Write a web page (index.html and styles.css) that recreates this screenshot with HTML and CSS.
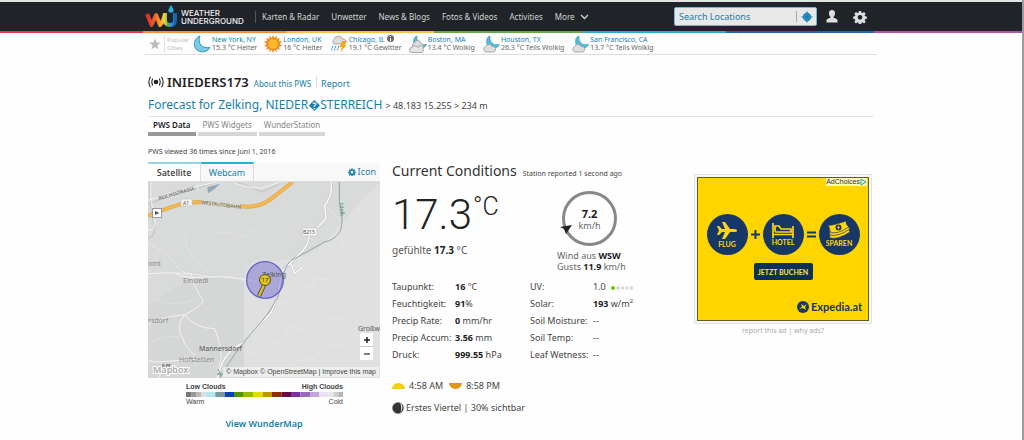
FILE: index.html
```html
<!DOCTYPE html>
<html lang="de">
<head>
<meta charset="utf-8">
<title>INIEDERS173 | Weather Underground</title>
<link rel="stylesheet" href="styles.css">
</head>
<body>
<svg class="defs" aria-hidden="true">
  <symbol id="moon" viewBox="0 0 18 18"><path d="M7 1C4 8 9 14 17 12.500C14 19 3 18 1.500 11C.8 6 3 2.500 7 1Z" fill="#7cc9e4" stroke="#2a9ac4"/></symbol>
  <symbol id="mooncloud" viewBox="0 0 18 18"><path d="M8 1C7 7 11 11 17.500 9.500C15 15 7 14 5 9C4 5 5 2 8 1Z" fill="#55bbdf" stroke="#2a9ac4" stroke-width=".7"/><path d="M3.500 17A3 3 0 0 1 3.500 11.500A3.500 3.500 0 0 1 10 11.500A2.800 2.800 0 0 1 11.500 17Z" fill="#dedede" stroke="#999" stroke-width=".8"/></symbol>
  <symbol id="gear" viewBox="0 0 16 16"><path fill="currentColor" fill-rule="evenodd" d="M6.700 1h2.600l.4 2 1.100.5 1.800-1.200 1.900 1.900-1.200 1.800.5 1.100 2 .4v2.600l-2 .4-.5 1.100 1.200 1.800-1.900 1.900-1.800-1.200-1.100.5-.4 2H6.700l-.4-2-1.100-.5-1.800 1.200-1.900-1.900 1.200-1.800-.5-1.100-2-.4V7.500l2-.4.5-1.100L1.500 4.200l1.900-1.900 1.800 1.200 1.100-.5ZM8 5.700a2.700 2.700 0 1 0 0 5.400a2.700 2.700 0 1 0 0-5.400Z"/></symbol>
</svg>
<header class="topbar">
  <div class="container topbar-inner">
    <a class="logo" href="#">
      <svg width="34" height="24" viewBox="0 0 34 24" aria-hidden="true">
        <defs>
          <linearGradient id="wfill"><stop offset="0" stop-color="#d8302f"/><stop offset=".45" stop-color="#f0642c"/><stop offset=".8" stop-color="#fbb02e"/><stop offset="1" stop-color="#f5cf35"/></linearGradient>
          <linearGradient id="ufill"><stop offset="0" stop-color="#e8d53a"/><stop offset=".25" stop-color="#5bb350"/><stop offset=".6" stop-color="#1f9ed8"/><stop offset="1" stop-color="#1762b5"/></linearGradient>
        </defs>
        <path d="M2 9L6.500 20L11 10L15 20Q18 17 20 9" fill="none" stroke="url(#wfill)" stroke-width="4" stroke-linejoin="round"/>
        <path d="M20 8V15Q20 20 25 20Q30 20 30 15V8" fill="none" stroke="url(#ufill)" stroke-width="4"/>
        <path d="M26 0Q22.500 5 23.500 6.500Q26 9 28.500 6.500Q29 4.500 26 0Z" fill="#35a9df"/>
      </svg>
      <span>WEATHER<br>UNDERGROUND</span>
    </a>
    <nav class="nav">
      <a href="#">Karten &amp; Radar</a><a href="#">Unwetter</a><a href="#">News &amp; Blogs</a><a href="#">Fotos &amp; Videos</a><a href="#">Activities</a>
      <a href="#">More <svg width="9" height="6" viewBox="0 0 9 6" aria-hidden="true"><path d="M1 1L4.500 4.500L8 1" fill="none" stroke="currentColor" stroke-width="1.300"/></svg></a>
    </nav>
    <form class="search">
      <input type="text" placeholder="Search Locations" aria-label="Search Locations">
      <button type="button" aria-label="Locate me"><svg width="12" height="12" viewBox="0 0 12 12"><circle cx="6" cy="6" r="4.200" fill="#157fae"/><path d="M6 .5V11.500M.5 6H11.500" stroke="#157fae" stroke-width="1.200"/><circle cx="6" cy="6" r="2.600" fill="none" stroke="#5aa8c8" stroke-width=".7"/></svg></button>
    </form>
    <button class="tool" type="button" aria-label="Account"><svg width="12" height="13" viewBox="0 0 12 13"><path fill="currentColor" d="M6 0a3 3.200 0 0 1 3 3.300c0 1.700-.7 2.900-1.500 3.700v.8C10 8.700 11.500 9 11.500 10.500V12.500H.5V10.500C.5 9 2 8.700 4.500 7.800V7C3.700 6.200 3 5 3 3.300A3 3.200 0 0 1 6 0Z"/></svg></button>
    <button class="tool" type="button" aria-label="Settings"><svg width="14" height="14"><use href="#gear"/></svg></button>
  </div>
</header>
<div class="rainbow"></div>
<section class="container cities" aria-label="Popular Cities">
  <button class="star" type="button" aria-label="Favourites"><svg width="12" height="12" viewBox="0 0 12 12"><path fill="#bbb" d="M6 .5L7.500 4.400L11.700 4.600L8.400 7.200L9.500 11.300L6 9L2.500 11.300L3.600 7.200L.3 4.600L4.500 4.400Z"/></svg></button>
  <div class="popular">Popular<br>Cities</div>
  <div class="city"><svg width="18" height="18"><use href="#moon"/></svg><p><a href="#">New York, NY</a>15.3 °C Heiter</p></div>
  <div class="city"><svg width="18" height="18" viewBox="0 0 18 18"><path fill="#f08a24" d="M9 0l1.300 3 2.300-2.400.1 3.300 3.200-1.100-1.200 3.100 3.300.6L15.500 9l2.500 2-3.300.7 1.200 3-3.200-1-.1 3.300-2.300-2.300L9 18l-1.300-3.300L5.400 17l-.1-3.300-3.200 1 1.200-3L0 11l2.500-2L0 6.500l3.300-.6-1.200-3.100 3.200 1.100.1-3.300L7.700 3Z"/><circle cx="9" cy="9" r="4.800" fill="#fdb92e"/></svg><p><a href="#">London, UK</a>16 °C Heiter</p></div>
  <div class="city"><svg width="18" height="18" viewBox="0 0 18 18"><path d="M4 9A2.800 2.800 0 0 1 4 4.500A4.500 4.500 0 0 1 12.500 4A2.700 2.700 0 0 1 14.500 9Z" fill="#ddd" stroke="#999" stroke-width=".8"/><path fill="#f9a61a" d="M12 6H17L14.500 10H16.500L10 17.500L12 12H9.500Z"/><path d="M3 11L1 16M6 11L4 16M9 11L7 16" stroke="#3ba7da" stroke-width="1.200" stroke-dasharray="2 .7"/></svg><p><a href="#">Chicago, IL</a> <svg class="info" width="7" height="7" viewBox="0 0 7 7"><circle cx="3.500" cy="3.500" r="3.500" fill="#666"/><path d="M3.500 1V2M3.500 3V6" stroke="#fff"/></svg><br>19.1 °C Gewitter</p></div>
  <div class="city"><svg width="18" height="18" viewBox="0 0 18 18"><use href="#mooncloud"/><path d="M5 13A3 3 0 0 1 5 8A3.600 3.600 0 0 1 12 8.500A2.600 2.600 0 0 1 13 13.500Z" fill="#ddd" stroke="#999" stroke-width=".8"/><path d="M3 17.500A2.500 2.500 0 0 1 3 12.500A3.500 3.500 0 0 1 9 12.500A2.500 2.500 0 0 1 14 14Q15 16.500 13 17.500Z" fill="#e5e5e5" stroke="#999" stroke-width=".8"/></svg><p><a href="#">Boston, MA</a>13.4 °C Wolkig</p></div>
  <div class="city"><svg width="18" height="18"><use href="#mooncloud"/></svg><p><a href="#">Houston, TX</a>26.3 °C Teils Wolkig</p></div>
  <div class="city"><svg width="18" height="18"><use href="#mooncloud"/></svg><p><a href="#">San Francisco, CA</a>13.7 °C Teils Wolkig</p></div>
</section>
<main class="container page">
  <div class="title">
    <svg width="16" height="12" viewBox="0 0 16 12" aria-hidden="true"><circle cx="8" cy="6" r="2.300" fill="#222"/><path d="M4.800 2.500Q2.800 6 4.800 9.500M2.500 .7Q-.8 6 2.500 11.300M11.200 2.500Q13.200 6 11.200 9.500M13.500 .7Q16.800 6 13.500 11.300" fill="none" stroke="#222" stroke-width="1.100"/></svg>
    <h1>INIEDERS173</h1><a class="about" href="#">About this PWS</a><a class="report" href="#">Report</a>
  </div>
  <div class="forecast"><a href="#">Forecast for Zelking, NIEDER�STERREICH</a> <span>&gt; 48.183 15.255 &gt; 234 m</span></div>
  <nav class="tabs"><a class="active" href="#">PWS Data</a><a href="#">PWS Widgets</a><a href="#">WunderStation</a></nav>
  <p class="views">PWS viewed 36 times since Juni 1, 2016</p>
  <div class="columns">
    <section class="map-col">
      <div class="map-tabs"><a class="active" href="#">Satellite</a><a href="#">Webcam</a><a class="icon-link" href="#"><svg width="8" height="8"><use href="#gear"/></svg> Icon</a></div>
      <div class="map">
        <svg class="map-art" viewBox="0 0 232 196" role="img" aria-label="Karte von Zelking">
          <rect width="232" height="196" fill="#d9dada"/>
          <g transform="scale(.33333)">
            <path d="M698 0L640 55Q580 130 510 200Q440 245 330 235Q285 250 288 310V588H698Z" fill="#dfe0df"/>
            <path d="M288 300V588H0V370Q100 300 180 276Z" fill="#d5d7d7"/>
            <path d="M178 16L216 5L196 24L180 34Z" fill="#93a7b5"/>
            <g fill="none" stroke="#c9caca" stroke-width="5"><path d="M0 170Q25 160 18 130L8 85L5 0"/><path d="M0 185Q50 205 80 240Q90 275 130 275L200 286"/><path d="M0 65Q100 30 210 0M150 24L147 0M255 0Q290 5 340 30Q390 10 400 0"/></g>
            <g fill="none" stroke="#f2f2f1" stroke-width="3">
              <path d="M8 0Q5 60 20 100Q25 150 0 145M0 55Q100 20 210 0M150 24L147 0M255 0Q290 18 340 18L400 0"/>
              <path d="M0 185Q50 205 80 240Q90 275 130 275L200 286M80 275Q110 290 180 285Q240 280 330 300"/>
              <path d="M0 275Q60 270 130 275Q130 300 165 355Q160 375 110 398L70 403L0 425M110 398Q140 440 200 440Q220 490 220 530L205 588M110 398Q80 430 105 470Q110 495 140 520"/>
              <path d="M180 530L20 540L0 535M60 545L30 588"/>
            </g>
            <g fill="none" stroke="#eaebea" stroke-width="1.500">
              <path d="M360 400L390 360Q440 370 430 340Q470 350 460 310Q510 330 500 290Q560 300 545 280L620 320L698 270"/>
              <path d="M300 515Q350 520 365 480Q405 500 415 440Q450 430 480 450Q530 450 540 410Q590 420 610 380L698 340M430 550Q450 520 500 530Q530 480 590 490L650 420"/>
              <path d="M540 80L575 110L560 160L590 180L570 215M110 160Q120 230 160 250L180 275M190 160Q230 140 280 165L330 140"/>
              <path d="M0 490Q50 450 100 470M20 350Q70 380 150 350"/>
            </g>
            <path d="M0 102Q65 75 115 62L160 60M275 73Q340 80 380 42L434 0" fill="none" stroke="#dba84c" stroke-width="12"/>
            <path d="M0 102Q65 75 115 62L160 60M275 73Q340 80 380 42L434 0" fill="none" stroke="#f3b950" stroke-width="8"/>
            <path d="M160 60L275 73" fill="none" stroke="#e6d3ae" stroke-width="8"/>
            <path d="M550 0Q552 45 530 70L534 110L482 165Q485 190 445 225L400 270Q395 340 370 390L290 480Q220 510 210 588M425 235L440 275L465 255" fill="none" stroke="#bfc0c0" stroke-width="8"/>
            <path d="M550 0Q552 45 530 70L534 110L482 165Q485 190 445 225L400 270Q395 340 370 390L290 480Q220 510 210 588M425 235L440 275L465 255" fill="none" stroke="#f8f8f7" stroke-width="5"/>
            <path d="M574 0V60Q588 110 578 145Q560 175 530 180L430 235Q405 255 398 320Q380 380 310 455Q260 510 215 588" fill="none" stroke="#90a5b4" stroke-width="3"/>
            <circle cx="351" cy="294" r="55" fill="#7770d4" fill-opacity=".5" stroke="#6963c5" stroke-width="4"/>
          </g>
          <g class="road-label">
            <text transform="translate(11 18) rotate(-16)">REICHSSTRASSE</text>
            <text transform="translate(53 22) rotate(7)">WESTAUTOBAHN</text>
            <rect x="33" y="17" width="11" height="7" fill="#f3f3f3" stroke="#bbb" stroke-width=".5"/><text x="35" y="23">A1</text>
            <rect x="154" y="46" width="15" height="8" fill="#f3f3f3" stroke="#bbb" stroke-width=".5"/><text x="155" y="52">B215</text>
            <text class="river" transform="translate(191 21) rotate(85)">Melk</text>
          </g>
          <g class="place"><text x="0" y="84">oint</text><text x="35" y="101">Einsiedl</text><text x="0" y="141">rsdorf</text><text x="31" y="180">Hofstetten</text></g>
          <g class="place town"><text x="114" y="95">Zelking</text><text x="210" y="149">Großw</text><text x="51" y="169">Mannersdorf</text><text x="13" y="187">Aff</text></g>
          <path d="M117 101L111 114" stroke="#333" stroke-width="4"/><path d="M117 101L111 114" stroke="#dfc41e" stroke-width="2.500"/>
          <circle cx="117" cy="98" r="5.500" fill="#dfc41e" stroke="#554a22"/><text class="temp-pin" x="117" y="100" text-anchor="middle">17</text>
          <path d="M70 187L73 194M72 190L69 193M70 192H74" stroke="#67a38b"/>
          <text class="mapbox" x="5" y="191">Mapbox</text>
        </svg>
        <button class="play" type="button" aria-label="Play"><svg width="6" height="6" viewBox="0 0 6 6"><path d="M1 1L5.500 3L1 5Z" fill="#555"/></svg></button>
        <div class="zoom"><button type="button" aria-label="Zoom in"><svg width="8" height="8"><path d="M4 1V7M1 4H7" stroke="#222" stroke-width="1.500"/></svg></button><button type="button" aria-label="Zoom out"><svg width="8" height="8"><path d="M1 4H7" stroke="#555" stroke-width="1.500"/></svg></button></div>
        <div class="credit"><a href="#">© Mapbox</a> <a href="#">© OpenStreetMap</a> | <a href="#">Improve this map</a></div>
      </div>
      <div class="legend">
        <div class="legend-row strong"><span>Low Clouds</span><span>High Clouds</span></div>
        <svg viewBox="0 0 471 15" preserveAspectRatio="none" aria-hidden="true"><path fill="#777" d="M0 0h17v15H0z"/><path fill="#999" d="M17 0h15v15H17z"/><path fill="#bbb" d="M32 0h13v15H32z"/><path fill="#ddd" d="M45 0h14v15H45z"/><path fill="#b2e7eb" d="M59 0h29v15H59z"/><path fill="#7e999d" d="M88 0h28v15H88z"/><path fill="#0b40b5" d="M116 0h28v15h-28z"/><path fill="#529300" d="M144 0h29v15h-29z"/><path fill="#94bd00" d="M173 0h28v15h-28z"/><path fill="#dde000" d="M201 0h29v15h-29z"/><path fill="#c09600" d="M230 0h28v15h-28z"/><path fill="#902d00" d="M258 0h29v15h-29z"/><path fill="#6a0849" d="M287 0h28v15h-28z"/><path fill="#7932a0" d="M315 0h28v15h-28z"/><path fill="#9b68bf" d="M343 0h29v15h-29z"/><path fill="#c3a5d9" d="M372 0h28v15h-28z"/><path fill="#e9e1f1" d="M400 0h28v15h-28z"/><path fill="#e6e6e6" d="M428 0h15v15h-15z"/><path fill="#ccc" d="M443 0h14v15h-14z"/><path fill="#b4b4b4" d="M457 0h14v15h-14z"/></svg>
        <div class="legend-row"><span>Warm</span><span>Cold</span></div>
      </div>
      <a class="wundermap" href="#">View WunderMap</a>
    </section>
    <section class="conditions">
      <div class="cond-head"><h2>Current Conditions</h2><span>Station reported 1 second ago</span></div>
      <div class="now">
        <div><div class="temp"><span>17.3</span><span class="unit">°C</span></div><p class="feels">gefühlte <b>17.3</b> °C</p></div>
        <div class="wind">
          <div class="dial"><b>7.2</b><span>km/h</span><svg class="arrow" width="12" height="10" viewBox="0 0 12 10" aria-hidden="true"><path d="M0 2L12 0L6 9L4 4Z" fill="#222"/></svg></div>
          <p>Wind aus <b>WSW</b><br>Gusts <b>11.9</b> km/h</p>
        </div>
      </div>
      <table class="data">
        <tr><th>Taupunkt:</th><td><b>16</b> °C</td><th>UV:</th><td>1.0 <svg class="uv" width="23" height="4" viewBox="0 0 23 4"><circle cx="2" cy="2" r="2" fill="#70c800"/><g fill="#d8d8d8"><circle cx="7" cy="2" r="1.800"/><circle cx="11.500" cy="2" r="1.800"/><circle cx="16" cy="2" r="1.800"/><circle cx="20.500" cy="2" r="1.800"/></g></svg></td></tr>
        <tr><th>Feuchtigkeit:</th><td><b>91</b>%</td><th>Solar:</th><td><b>193</b> w/m<sup>2</sup></td></tr>
        <tr><th>Precip Rate:</th><td><b>0</b> mm/hr</td><th>Soil Moisture:</th><td>--</td></tr>
        <tr><th>Precip Accum:</th><td><b>3.56</b> mm</td><th>Soil Temp:</th><td>--</td></tr>
        <tr><th>Druck:</th><td><b>999.55</b> hPa</td><th>Leaf Wetness:</th><td>--</td></tr>
      </table>
      <div class="astro"><svg width="13" height="6" viewBox="0 0 13 6"><path d="M0 6A6.500 6 0 0 1 13 6Z" fill="#f2ce0c"/></svg><span>4:58 AM</span><svg class="set" width="13" height="6" viewBox="0 0 13 6"><path d="M0 0A6.500 6 0 0 0 13 0Z" fill="#df9514"/></svg><span>8:58 PM</span></div>
      <div class="moon"><svg width="12" height="12" viewBox="0 0 12 12"><circle cx="6" cy="6" r="5.500" fill="#333" stroke="#777" stroke-width=".7"/><path d="M8 .7Q13 5 8 11.300Q10.500 6 8 .7Z" fill="#eee"/></svg><span>Erstes Viertel | 30% sichtbar</span></div>
    </section>
    <aside class="ad-col">
      <div class="frame"><div class="ad">
        <a class="choices" href="#">AdChoices<svg width="7" height="8" viewBox="0 0 7 8"><path d="M1 1L6 4L1 7Z" fill="none" stroke="#19a6c4"/></svg></a>
        <div class="deal">
          <div class="disc"><svg width="22" height="19" viewBox="0 0 22 19"><path fill="#ffd60a" d="M1 5H3L6 8H9L6 1H9L14 8H18Q21 8 21 9.500Q21 11 18 11H14L9 18H6L9 11H6L3 14H1L3 9.500Z"/></svg><span>FLUG</span></div>
          <i class="op"><svg width="9" height="9"><path d="M4.500 0V9M0 4.500H9" stroke="#173766" stroke-width="2"/></svg></i>
          <div class="disc"><svg width="22" height="15" viewBox="0 0 22 15"><path fill="none" stroke="#ffd60a" stroke-width="1.700" d="M1 0V15M21 3V15M1 11.500H21M3 8.500V3H7L9 6H19V9H3M3 9H20"/></svg><span>HOTEL</span></div>
          <i class="op"><svg width="9" height="9"><path d="M0 2.500H9M0 6.500H9" stroke="#173766" stroke-width="2"/></svg></i>
          <div class="disc"><svg width="24" height="18" viewBox="0 0 24 18"><g stroke="#173766" fill="#ffd60a" stroke-width=".7"><path d="M2 11Q8 16 22 8L23 11Q11 19 3 17Z"/><path d="M2 8Q8 13 21 5L23 8Q11 16 3 14Z"/><path d="M1 4Q5 5 19 0Q19 4 22 6Q10 14 3 11Q3 7 1 4Z"/></g><circle cx="11.500" cy="6.500" r="3" fill="#173766"/><path d="M11.500 4.500V8.500M10 6.500H13" stroke="#ffd60a" stroke-width=".8"/></svg><span>SPAREN</span></div>
        </div>
        <button class="book" type="button">JETZT BUCHEN</button>
        <div class="brand"><svg width="12" height="12" viewBox="0 0 12 12"><circle cx="6" cy="6" r="6" fill="#173766"/><path d="M2 8L5 6L4 3L7 5L10 3L8 6L9 9L6 7Z" fill="#ffd60a"/></svg>Expedia.at</div>
      </div></div>
      <p class="adlinks"><a href="#">report this ad</a> | <a href="#">why ads?</a></p>
    </aside>
  </div>
</main>
</body>
</html>
```
FILE: styles.css
```css
* { box-sizing: border-box; }
body { margin: 0; min-height: 100vh; border-right: 2px solid #999ca0; background: #fefefe; color: #444; font: 9px/12px "Noto Sans", "Open Sans", sans-serif; }
a { color: #1580ad; text-decoration: none; }
p, h1, h2 { margin: 0; font-weight: 400; }
b { font-weight: 700; color: #222; }
svg { display: block; flex: none; }
button { padding: 0; border: 0; background: none; display: flex; align-items: center; justify-content: center; }
.defs { position: absolute; width: 0; height: 0; }
.container { max-width: 732px; margin: 0 auto; }

.topbar { border-top: 2px solid #e3e3e3; background: #202327; }
.topbar-inner { display: flex; align-items: center; height: 29px; }
.logo { display: flex; align-items: center; gap: 2px; width: 111px; color: #f2f2f2; font: 500 8px/8px Inter, sans-serif; border-right: 1px solid #555; height: 12px; }
.nav { display: flex; gap: 12px; padding-left: 6px; white-space: nowrap; }
.nav a { display: flex; align-items: center; gap: 5px; color: #d5d5d5; font-size: 8px; }
.search { display: flex; width: 143px; height: 19px; margin-left: auto; border: 1px solid #63bcd8; border-radius: 2px; background: #e8e8e8; padding: 3px 0; }
.search input { flex: 1; min-width: 0; border: 0; padding: 0 4px; background: none; font: 9px/12px "Noto Sans", sans-serif; }
.search input::placeholder { color: #1580ad; opacity: 1; }
.search button { width: 20px; border-left: 1px solid #aaa; }
.tool { width: 14px; margin-left: 14px; margin-right: 0; color: #ddd; }
.tool:first-of-type { margin-left: 8px; }
.tool:last-child { margin-right: 10px; }
.rainbow { height: 2px; background: linear-gradient(90deg, #e2384d 14%, #f68d3c 14% 28%, #fbc043 28% 42.500%, #68a94c 42.500% 57%, #2fa9d4 57% 71%, #2166b3 71% 85.500%, #b0559f 85.500%); }

.cities { display: flex; align-items: center; height: 22px; border-bottom: 1px solid #ddd; font-size: 7px; line-height: 8px; white-space: nowrap; color: #666; }
.star { width: 19px; }
.popular { width: 29px; padding-left: 2px; border-left: 1px solid #ddd; font-size: 6px; color: #bbb; }
.city { display: flex; align-items: center; gap: 1px; margin-right: 7px; }
.city a { display: block; }
.city:nth-child(5) a, .info { display: inline-block; }

.page { padding: 17px 3px 0; }
.title { display: flex; align-items: center; height: 20px; gap: 3px; }
.title h1 { font-weight: 600; font-size: 13px; line-height: 20px; color: #222; }
.about { font-size: 8px; margin-left: 2px; padding-top: 3px; }
.report { margin-left: 2px; padding: 3px 0 0 4px; border-left: 1px solid #ddd; line-height: 9px; }
.forecast { height: 25px; line-height: 25px; border-bottom: 1px solid #e5e5e5; font-size: 12px; }
.forecast span { font-size: 9px; }
.tabs { display: flex; gap: 2px; }
.tabs a { padding: 2px 5px; color: #888; font-size: 8px; border-bottom: 4px solid #d6d6d6; height: 19px; }
.tabs .active { font-weight: 600; color: #222; border-color: #999; }
.views { margin: 10px 0 4px; font-size: 7px; }
.columns { display: grid; grid-template-columns: 232fr 290fr 178fr; gap: 12px; align-items: start; padding-right: 2px; }

.map-col { display: flex; flex-direction: column; }
.map-tabs { display: flex; height: 20px; background: #f8f8f8; border-bottom: 1px solid #ddd; }
.map-tabs a { width: 53px; text-align: center; border-top: 2px solid #2fafd3; border-right: 1px solid #ddd; line-height: 17px; }
.map-tabs .active { background: #fff; color: #333; font-weight: 500; border-top-color: #94d5e8; }
.map-tabs .icon-link { display: flex; align-items: center; gap: 2px; width: auto; margin-left: auto; padding-right: 4px; border: 0; }
.map { position: relative; }
.map-art { width: 100%; height: auto; }
.road-label { font-size: 5px; fill: #555; }
.road-label .river { font-size: 6px; fill: #5f917f; }
.place { font-size: 7px; fill: #888; }
.place.town { fill: #555; }
.temp-pin { font-size: 6px; fill: #333; }
.mapbox { font: 600 9px "Noto Sans", sans-serif; fill: #aaa; stroke: #fff; stroke-width: 2px; paint-order: stroke; }
.play, .zoom { position: absolute; background: #fff; }
.play { left: 4px; top: 26px; width: 10px; height: 10px; border: 1px solid #999; }
.zoom { right: 7px; bottom: 18px; }
.zoom button { width: 13px; height: 13px; }
.zoom button + button { border-top: 1px solid #ccc; height: 14px; }
.credit { position: absolute; right: 1px; bottom: 1px; padding: 0 3px; background: rgba(240, 240, 240, .85); font: 7px/10px "Liberation Sans", sans-serif; white-space: nowrap; }
.credit a { color: #444; }
.legend { width: 157px; margin: 4px 0 0 38px; }
.legend svg { width: 100%; height: 5px; }
.legend-row { display: flex; justify-content: space-between; font: 7px/10px "Liberation Sans", sans-serif; }
.legend-row.strong { font-weight: 700; }
.wundermap { align-self: center; margin-top: 11px; font-weight: 600; font-size: 9px; }

.conditions { min-width: 0; }
.cond-head { display: flex; align-items: baseline; gap: 6px; white-space: nowrap; font-size: 7px; }
.cond-head h2 { font-size: 14px; line-height: 18px; color: #333; }
.now { display: grid; grid-template-columns: 165fr 125fr; padding-top: 11px; height: 97px; }
.temp { display: flex; gap: 1px; height: 48px; font: 300 42px/48px Roboto, sans-serif; color: #222; }
.unit { font-size: 25px; line-height: 32px; }
.feels { font-size: 10px; line-height: 22px; color: #555; }
.wind { color: #666; line-height: 11px; }
.dial { position: relative; display: flex; flex-direction: column; align-items: center; justify-content: center; width: 55px; height: 55px; margin: 0 0 4px 5px; border: 3px solid #888; border-radius: 50%; }
.dial b { font-size: 11px; line-height: 13px; }
.arrow { position: absolute; left: -5px; bottom: 8px; }
.data { width: 100%; table-layout: fixed; border-collapse: collapse; margin-top: 1px; }
.data th, .data td { width: 63px; height: 17px; padding: 0; text-align: left; font-weight: 400; white-space: nowrap; }
.data td:nth-child(2) { width: 75px; }
.data td:last-child { width: auto; }
.data sup { font-size: 6px; line-height: 0; }
.uv { display: inline-block; margin-left: 3px; }
.astro, .moon { display: flex; align-items: center; gap: 4px; height: 22px; }
.astro { margin-top: 12px; }
.set { margin-left: 2px; }
.moon { gap: 2px; }

.ad-col { padding-top: 12px; }
.frame { border: 1px solid #e2e2e2; padding: 2px; background: #f8f8f8; }
.ad { position: relative; height: 144px; border: 1px solid #665d20; background: #ffd500; color: #173766; }
.choices { position: absolute; top: 0; right: 1px; display: flex; align-items: center; background: #fff6bd; color: #333; font: 7px/8px "Liberation Sans", sans-serif; }
.deal { display: flex; justify-content: center; align-items: center; padding-top: 36px; }
.disc { display: flex; flex-direction: column; align-items: center; justify-content: center; width: 41px; height: 41px; border-radius: 50%; background: #173766; color: #ffd60a; font: 700 7px/9px Lato, sans-serif; }
.op { display: flex; justify-content: center; width: 15px; }
.book { height: 17px; width: 59px; margin: 8px auto 0; border-radius: 2px; background: #0b3157; color: #ffe14c; font: 700 7px/10px Lato, sans-serif; white-space: nowrap; }
.brand { display: flex; align-items: center; justify-content: flex-end; gap: 2px; margin: 20px 6px 0 0; font: 700 11px/14px Lato, sans-serif; }
.adlinks { text-align: center; font-size: 7px; line-height: 14px; color: #aaa; }
.adlinks a { color: #aaa; }
```
